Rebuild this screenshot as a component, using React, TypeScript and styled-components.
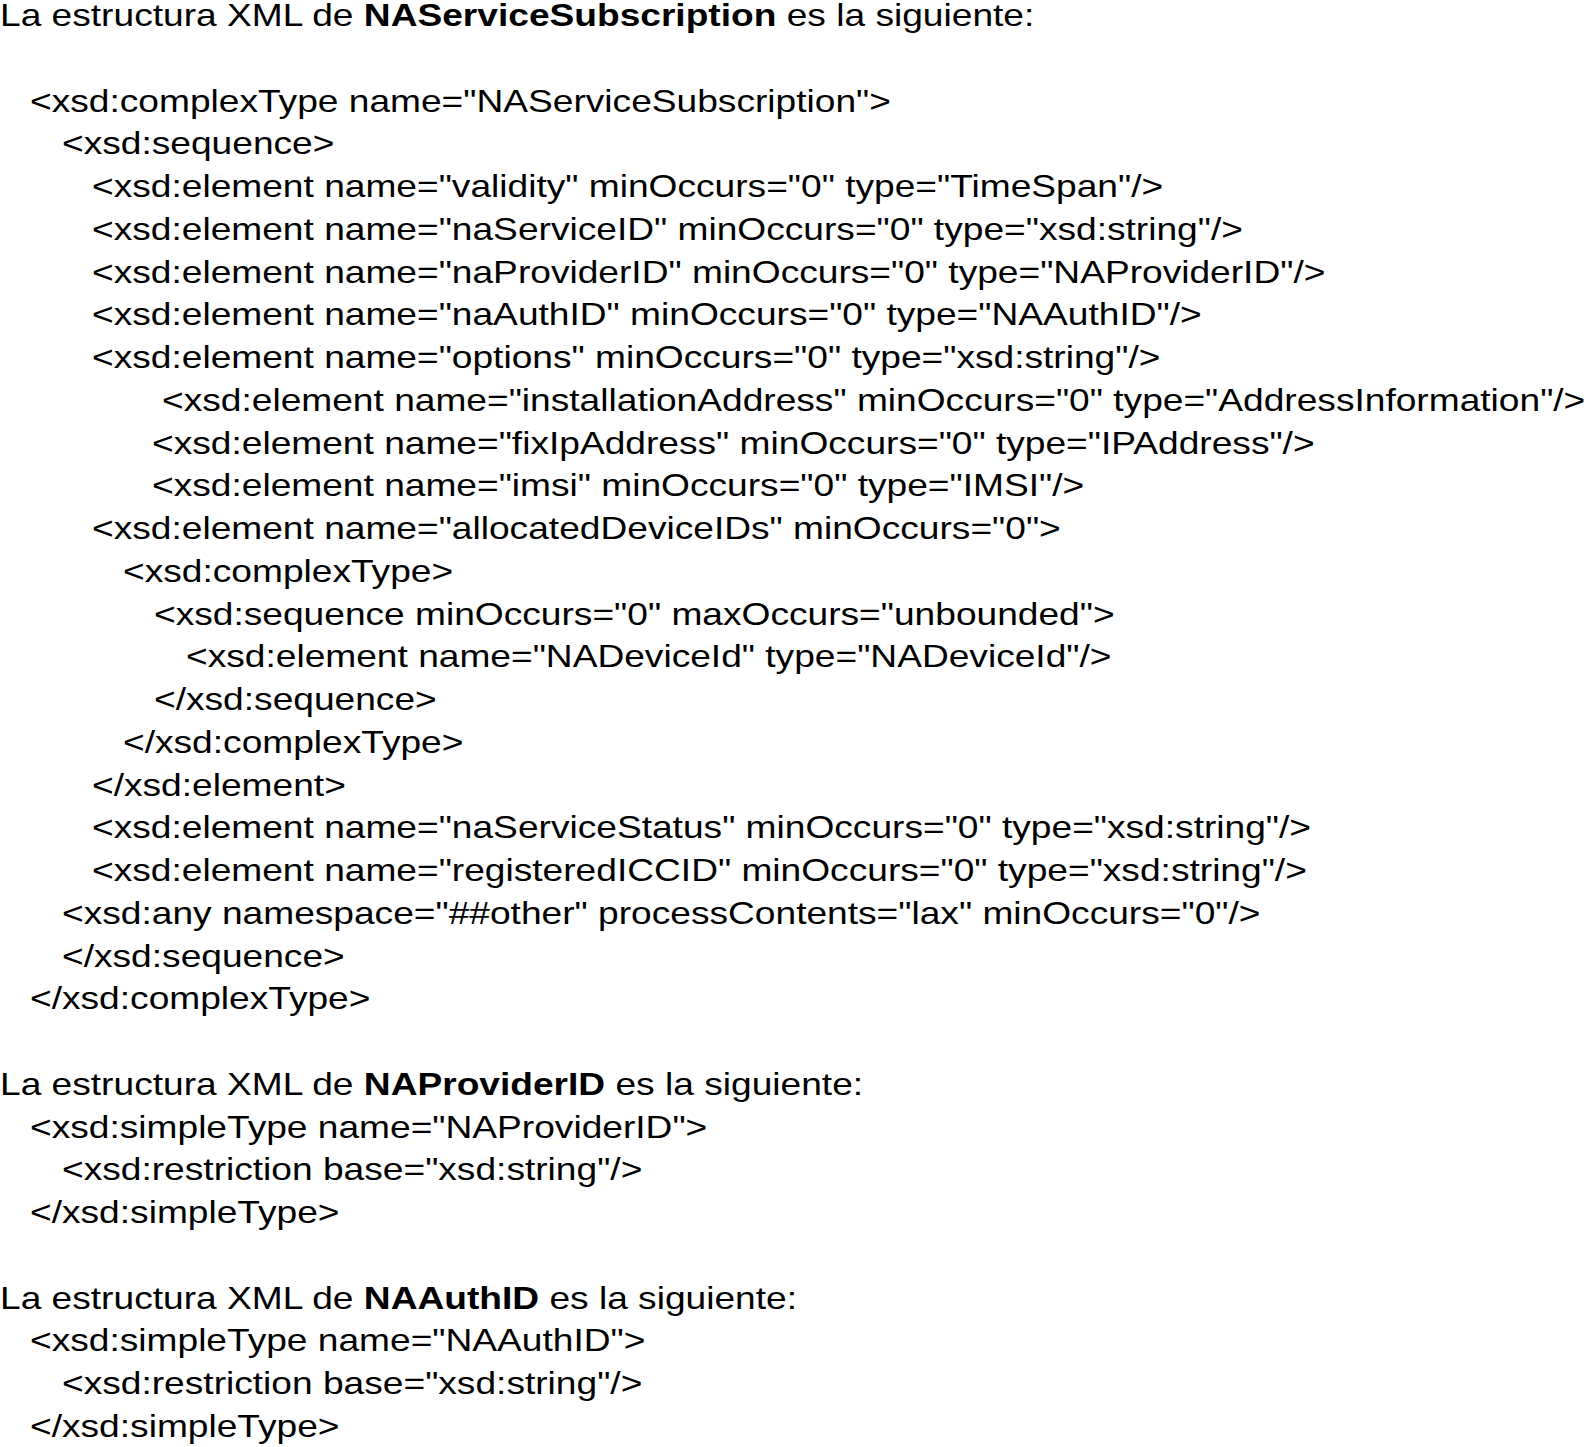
import React from "react";
import styled, { createGlobalStyle } from "styled-components";

const GlobalStyle = createGlobalStyle`
  html, body {
    margin: 0;
    padding: 0;
    background: #ffffff;
    overflow-x: hidden;
  }
  body {
    font-family: "Liberation Sans", Arial, sans-serif;
    color: #000000;
  }
`;

const Page = styled.main`
  display: flex;
  flex-direction: column;
  margin-top: -6px;
  font-family: "Liberation Sans", Arial, sans-serif;
  font-size: 32px;
  line-height: 42.75px;
  color: #000;
`;

const Line = styled.div<{ $indent: number }>`
  padding-left: ${(p) => p.$indent}px;
  white-space: pre;
  height: 42.75px;
`;

const Text = styled.span`
  display: inline-block;
  transform: scaleX(1.16);
  transform-origin: 0 50%;
`;

const Strong = styled.b`
  font-weight: 700;
`;

type Row = { i: number; t?: string; heading?: string };

const rows: Row[] = [
  { i: 0, heading: "NAServiceSubscription" },
  { i: 0, t: "" },
  { i: 30, t: '<xsd:complexType name="NAServiceSubscription">' },
  { i: 62, t: "<xsd:sequence>" },
  { i: 92, t: '<xsd:element name="validity" minOccurs="0" type="TimeSpan"/>' },
  { i: 92, t: '<xsd:element name="naServiceID" minOccurs="0" type="xsd:string"/>' },
  { i: 92, t: '<xsd:element name="naProviderID" minOccurs="0" type="NAProviderID"/>' },
  { i: 92, t: '<xsd:element name="naAuthID" minOccurs="0" type="NAAuthID"/>' },
  { i: 92, t: '<xsd:element name="options" minOccurs="0" type="xsd:string"/>' },
  { i: 162, t: '<xsd:element name="installationAddress" minOccurs="0" type="AddressInformation"/>' },
  { i: 152, t: '<xsd:element name="fixIpAddress" minOccurs="0" type="IPAddress"/>' },
  { i: 152, t: '<xsd:element name="imsi" minOccurs="0" type="IMSI"/>' },
  { i: 92, t: '<xsd:element name="allocatedDeviceIDs" minOccurs="0">' },
  { i: 123, t: "<xsd:complexType>" },
  { i: 154, t: '<xsd:sequence minOccurs="0" maxOccurs="unbounded">' },
  { i: 186, t: '<xsd:element name="NADeviceId" type="NADeviceId"/>' },
  { i: 154, t: "</xsd:sequence>" },
  { i: 123, t: "</xsd:complexType>" },
  { i: 92, t: "</xsd:element>" },
  { i: 92, t: '<xsd:element name="naServiceStatus" minOccurs="0" type="xsd:string"/>' },
  { i: 92, t: '<xsd:element name="registeredICCID" minOccurs="0" type="xsd:string"/>' },
  { i: 62, t: '<xsd:any namespace="##other" processContents="lax" minOccurs="0"/>' },
  { i: 62, t: "</xsd:sequence>" },
  { i: 30, t: "</xsd:complexType>" },
  { i: 0, t: "" },
  { i: 0, heading: "NAProviderID" },
  { i: 30, t: '<xsd:simpleType name="NAProviderID">' },
  { i: 62, t: '<xsd:restriction base="xsd:string"/>' },
  { i: 30, t: "</xsd:simpleType>" },
  { i: 0, t: "" },
  { i: 0, heading: "NAAuthID" },
  { i: 30, t: '<xsd:simpleType name="NAAuthID">' },
  { i: 62, t: '<xsd:restriction base="xsd:string"/>' },
  { i: 30, t: "</xsd:simpleType>" },
];

export default function App() {
  return (
    <>
      <GlobalStyle />
      <Page>
        {rows.map((r, idx) => (
          <Line key={idx} $indent={r.i}>
            <Text>
              {r.heading ? (
                <>
                  La estructura XML de <Strong>{r.heading}</Strong> es la siguiente:
                </>
              ) : (
                r.t
              )}
            </Text>
          </Line>
        ))}
      </Page>
    </>
  );
}
